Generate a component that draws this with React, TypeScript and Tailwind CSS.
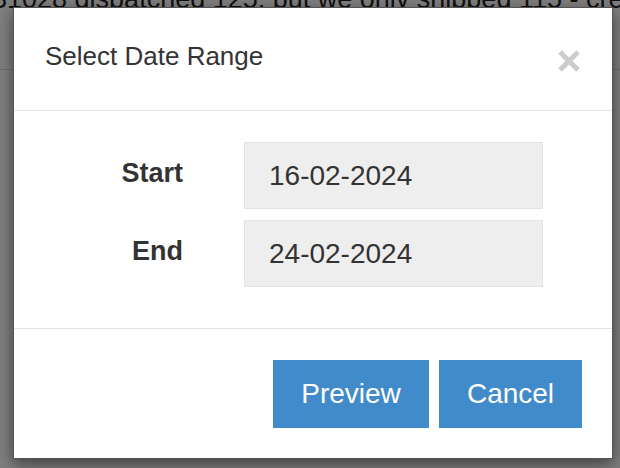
import { useState } from "react";

const CloseIcon = () => (
  <svg viewBox="0 0 24 24" className="h-[24px] w-[24px]" aria-hidden="true">
    <path d="M3 3 L21 21 M21 3 L3 21" stroke="#cccccc" strokeWidth="5" strokeLinecap="butt" />
  </svg>
);

const DateRow = ({ label, value }: { label: string; value: string }) => (
  <div className="flex items-center">
    <label className="w-[169px] -mt-[5px] text-right text-[27px] font-bold text-[#333]">{label}</label>
    <div className="ml-[61px] flex h-[67px] w-[299px] items-center border border-[#e3e3e3] bg-[#eeeeee] pl-[24px] text-[28px] text-[#333]">
      {value}
    </div>
  </div>
);

export default function App() {
  const [start] = useState("16-02-2024");
  const [end] = useState("24-02-2024");

  return (
    <div className="relative h-[468px] w-[620px] overflow-hidden bg-white font-['Liberation_Sans',Arial,sans-serif]">
      {/* page behind the dialog */}
      <div className="-ml-[8px] -mt-[16px] whitespace-nowrap text-[27px] leading-[30px] text-[#222]">
        31028 dispatched 125, but we only shipped 115 - credit note to follow
      </div>
      <div className="mt-[55px] border-b border-[#dddddd]" />

      <div className="absolute inset-0 bg-black/50" />

      {/* dialog */}
      <div className="absolute left-[13px] top-[7px] w-[600px] border border-[#555] bg-white shadow-[0_5px_15px_rgba(0,0,0,0.5)]">
        <div className="flex h-[103px] items-center justify-between border-b border-[#e5e5e5] pl-[31px] pr-[31px]">
          <h4 className="-mt-[6px] text-[26px] text-[#333]">Select Date Range</h4>
          <button className="mt-[3px]">
            <CloseIcon />
          </button>
        </div>

        <div className="flex flex-col gap-[11px] pb-[41px] pt-[31px]">
          <DateRow label="Start" value={start} />
          <DateRow label="End" value={end} />
        </div>

        <div className="flex justify-end gap-[10px] border-t border-[#e5e5e5] px-[30px] pb-[30px] pt-[31px]">
          <button className="h-[68px] w-[156px] bg-[#428bca] text-[28px] text-white">Preview</button>
          <button className="h-[68px] w-[143px] bg-[#428bca] text-[28px] text-white">Cancel</button>
        </div>
      </div>
    </div>
  );
}
